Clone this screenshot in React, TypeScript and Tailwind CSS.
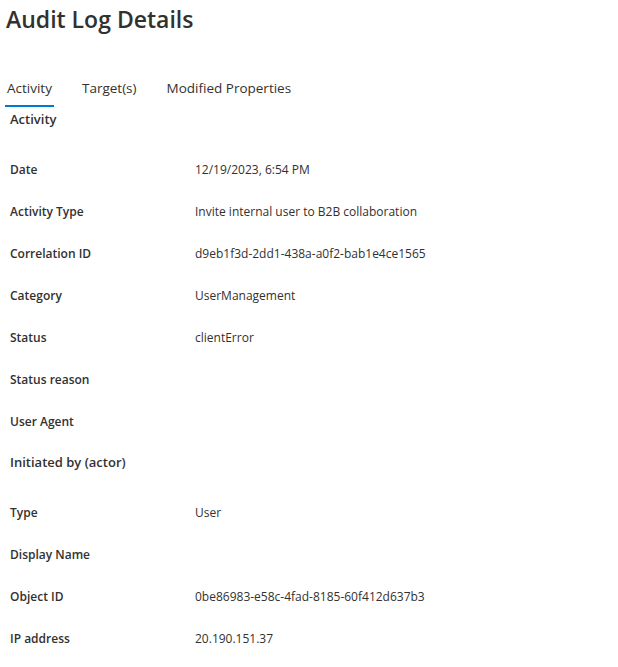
import React from 'react';

type Row = { label: string; value?: string };

const activityRows: Row[] = [
  { label: 'Date', value: '12/19/2023, 6:54 PM' },
  { label: 'Activity Type', value: 'Invite internal user to B2B collaboration' },
  { label: 'Correlation ID', value: 'd9eb1f3d-2dd1-438a-a0f2-bab1e4ce1565' },
  { label: 'Category', value: 'UserManagement' },
  { label: 'Status', value: 'clientError' },
  { label: 'Status reason' },
  { label: 'User Agent' },
];

const actorRows: Row[] = [
  { label: 'Type', value: 'User' },
  { label: 'Display Name' },
  { label: 'Object ID', value: '0be86983-e58c-4fad-8185-60f412d637b3' },
  { label: 'IP address', value: '20.190.151.37' },
];

const DetailRow: React.FC<Row> = ({ label, value }) => (
  <div className="flex items-center h-[42px] text-[12px]">
    <div className="w-[185px] shrink-0 font-semibold">{label}</div>
    <div>{value}</div>
  </div>
);

const App: React.FC = () => {
  const tabs = ['Activity', 'Target(s)', 'Modified Properties'];
  return (
    <div
      className="bg-white text-[#323130] w-[618px] h-[667px] overflow-hidden"
      style={{ fontFamily: '"Open Sans", "Noto Sans", sans-serif' }}
    >
      <h1 className="pl-[6px] pt-[2px] text-[23px] font-semibold leading-[34px]">Audit Log Details</h1>

      {/* Tabs */}
      <div className="flex items-end gap-[26px] pl-[5px] mt-[42px] text-[13.5px]">
        {tabs.map((t, i) => (
          <div
            key={t}
            className={`px-[2px] pb-[7px] leading-[20px] border-b-2 ${i === 0 ? 'border-[#0078d4]' : 'border-transparent'}`}
          >
            {t}
          </div>
        ))}
      </div>

      <div className="pl-[10px]">
        <div className="h-[26px] flex items-center text-[13px] font-semibold">Activity</div>
        <div className="mt-[16px]">
          {activityRows.map((r) => (
            <DetailRow key={r.label} {...r} />
          ))}
        </div>
        <div className="h-[40px] flex items-center text-[13px] font-semibold">Initiated by (actor)</div>
        <div className="mt-[9px]">
          {actorRows.map((r) => (
            <DetailRow key={r.label} {...r} />
          ))}
        </div>
      </div>
    </div>
  );
};

export default App;
